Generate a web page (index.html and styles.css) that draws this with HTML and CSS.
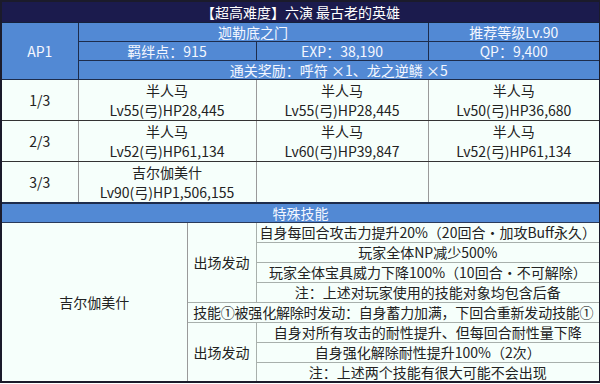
FILE: index.html
```html
<!DOCTYPE html>
<html lang="zh-CN">
<head>
  <meta charset="UTF-8">
  <meta name="viewport" content="width=device-width, initial-scale=1.0">
  <title>六演 最古老的英雄</title>
  <link rel="stylesheet" href="styles.css">
</head>
<body>
  <table class="quest">
    <colgroup>
      <col class="c-a">
      <col class="c-b">
      <col class="c-c">
      <col class="c-d">
      <col class="c-e">
    </colgroup>
    <tr class="title-row">
      <th colspan="5">【超高难度】六演 最古老的英雄</th>
    </tr>
    <tr class="info-row">
      <td rowspan="3" class="ap">AP1</td>
      <td colspan="3">迦勒底之门</td>
      <td>推荐等级Lv.90</td>
    </tr>
    <tr class="info-row">
      <td colspan="2">羁绊点：915</td>
      <td>EXP：38,190</td>
      <td>QP：9,400</td>
    </tr>
    <tr class="info-row">
      <td colspan="4">通关奖励：呼符 ×1、龙之逆鳞 ×5</td>
    </tr>
    <tr class="wave-row">
      <td class="wave">1/3</td>
      <td colspan="2">半人马<br>Lv55(弓)HP28,445</td>
      <td>半人马<br>Lv55(弓)HP28,445</td>
      <td>半人马<br>Lv50(弓)HP36,680</td>
    </tr>
    <tr class="wave-row">
      <td class="wave">2/3</td>
      <td colspan="2">半人马<br>Lv52(弓)HP61,134</td>
      <td>半人马<br>Lv60(弓)HP39,847</td>
      <td>半人马<br>Lv52(弓)HP61,134</td>
    </tr>
    <tr class="wave-row">
      <td class="wave">3/3</td>
      <td colspan="2">吉尔伽美什<br>Lv90(弓)HP1,506,155</td>
      <td></td>
      <td></td>
    </tr>
    <tr class="section-row">
      <td colspan="5">特殊技能</td>
    </tr>
    <tr class="skill-row">
      <td rowspan="8" colspan="2" class="boss">吉尔伽美什</td>
      <td rowspan="4" class="trigger">出场发动</td>
      <td colspan="2">自身每回合攻击力提升20%（20回合・加攻Buff永久）</td>
    </tr>
    <tr class="skill-row">
      <td colspan="2">玩家全体NP减少500%</td>
    </tr>
    <tr class="skill-row">
      <td colspan="2">玩家全体宝具威力下降100%（10回合・不可解除）</td>
    </tr>
    <tr class="skill-row">
      <td colspan="2">注：上述对玩家使用的技能对象均包含后备</td>
    </tr>
    <tr class="skill-row">
      <td colspan="3" class="tight">技能①被强化解除时发动：自身蓄力加满，下回合重新发动技能①</td>
    </tr>
    <tr class="skill-row">
      <td rowspan="3" class="trigger">出场发动</td>
      <td colspan="2">自身对所有攻击的耐性提升、但每回合耐性量下降</td>
    </tr>
    <tr class="skill-row">
      <td colspan="2">自身强化解除耐性提升100%（2次）</td>
    </tr>
    <tr class="skill-row">
      <td colspan="2">注：上述两个技能有很大可能不会出现</td>
    </tr>
  </table>
</body>
</html>
```

FILE: styles.css
```css
* {
  margin: 0;
  padding: 0;
  box-sizing: border-box;
}
body {
  background: #fff;
  font-family: "Noto Sans CJK SC", "Noto Sans", sans-serif;
  font-size: 14px;
  color: #222;
}
.quest {
  width: 599px;
  table-layout: fixed;
  border-collapse: collapse;
  border: 2px solid #1b1b2b;
}
.c-a { width: 77px; }
.c-b { width: 109px; }
.c-c { width: 69px; }
.c-d { width: 172px; }
.c-e { width: 172px; }
td, th {
  text-align: center;
  vertical-align: middle;
  line-height: 18px;
  white-space: nowrap;
  font-weight: normal;
  padding: 0;
}
.title-row th {
  height: 21px;
  background: #1b1b4d;
  color: #fff;
  border-bottom: 1px solid #15203a;
}
.info-row td {
  height: 19px;
  background: #5289d4;
  color: #f4f7ff;
  border: 1px solid #1d2c4c;
}
.wave-row td {
  height: 40px;
  line-height: 20px;
  background: #f6fffb;
  border-top: 1px solid #333;
  border-bottom: 1px solid #333;
  border-left: 1px solid #9a9a9a;
  border-right: 1px solid #9a9a9a;
}
.wave-row td:first-child {
  border-left: 2px solid #1b1b2b;
}
.section-row td {
  height: 19px;
  background: #5289d4;
  color: #f4f7ff;
  border-top: 2px solid #1d2c4c;
  border-bottom: 1px solid #2a3a5a;
}
.skill-row td {
  height: 20px;
  background: #f6fffb;
  border: 1px solid #a8b0ac;
}
.skill-row td.boss {
  border-left: 2px solid #1b1b2b;
  border-right: 1px solid #9a9a9a;
}
.skill-row td.trigger {
  border-left: 1px solid #9a9a9a;
}
.skill-row td.tight {
  letter-spacing: -0.2px;
}
```
